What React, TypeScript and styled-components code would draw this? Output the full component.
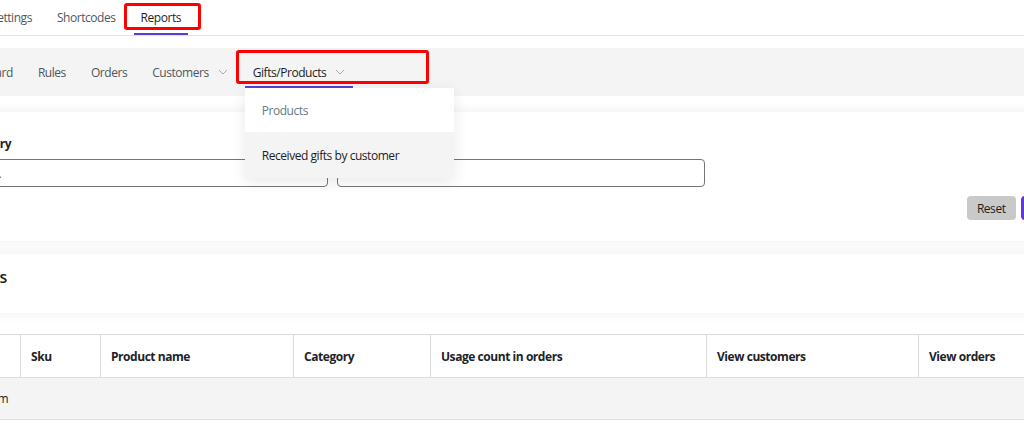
import React from "react";
import styled, { createGlobalStyle } from "styled-components";

const Global = createGlobalStyle`
  html, body { margin: 0; padding: 0; background: #fff; overflow: hidden; }
  body {
    font-family: "Open Sans", "Noto Sans", sans-serif;
    font-size: 12px;
    letter-spacing: -0.45px;
    color: #1e1e1e;
  }
  * { box-sizing: border-box; }
`;

const Page = styled.div`
  width: 1180px;
  margin-left: -80px;
  display: flex;
  flex-direction: column;
`;

const TopTabs = styled.nav`
  display: flex;
  gap: 11px;
  height: 36px;
  padding-left: 64px;
  border-bottom: 1px solid #e2e2e2;
`;

const TopTab = styled.div<{ $active?: boolean }>`
  position: relative;
  display: flex;
  align-items: center;
  height: 35px;
  padding: 2px 7px 0;
  color: ${(p) => (p.$active ? "#1e1e1e" : "#50575e")};
  border-bottom: 2px solid ${(p) => (p.$active ? "#5b3dd6" : "transparent")};
`;

const Highlight = styled.span<{ $l: number; $t: number; $w: number; $h: number }>`
  position: absolute;
  left: ${(p) => p.$l}px;
  top: ${(p) => p.$t}px;
  width: ${(p) => p.$w}px;
  height: ${(p) => p.$h}px;
  border: 3px solid #ff0000;
  border-radius: 3px;
  pointer-events: none;
  z-index: 20;
`;

const SubNav = styled.nav`
  display: flex;
  gap: 9px;
  height: 48px;
  margin-top: 12px;
  padding-left: 27px;
  background: #f4f4f4;
`;

const NavItem = styled.div<{ $active?: boolean }>`
  position: relative;
  display: flex;
  align-items: center;
  padding: 0 8px;
  color: ${(p) => (p.$active ? "#1e1e1e" : "#50575e")};
  &::after {
    content: "";
    display: ${(p) => (p.$active ? "block" : "none")};
    position: absolute;
    left: 0;
    right: 0;
    bottom: 8px;
    height: 2px;
    background: #5b3dd6;
  }
`;

const Chevron = styled.svg`
  width: 10px;
  height: 6px;
  margin-left: 9px;
  flex: none;
`;

const Dropdown = styled.div`
  position: absolute;
  left: 0;
  top: 40px;
  width: 209px;
  background: #fff;
  box-shadow: 0 4px 14px rgba(0, 0, 0, 0.09);
  z-index: 10;
  display: flex;
  flex-direction: column;
`;

const DropItem = styled.div<{ $hover?: boolean }>`
  display: flex;
  align-items: center;
  height: ${(p) => (p.$hover ? 46 : 44)}px;
  padding: 0 17px;
  background: ${(p) => (p.$hover ? "#f4f4f4" : "#fff")};
  color: ${(p) => (p.$hover ? "#1e1e1e" : "#6c7781")};
  white-space: nowrap;
`;

const Card = styled.section<{ $gap: number }>`
  margin: ${(p) => p.$gap}px 14px 0;
  background: #fff;
  box-shadow: 0 0 12px rgba(0, 0, 0, 0.07);
`;

const FilterBody = styled.div`
  padding: 24px 20px 21px;
  display: flex;
  flex-direction: column;
`;

const FilterGrid = styled.div`
  display: grid;
  grid-template-columns: 374px 368px;
  column-gap: 9px;
`;

const Field = styled.label`
  display: flex;
  flex-direction: column;
  gap: 7px;
`;

const LabelText = styled.span`
  font-weight: 700;
  line-height: 16px;
  padding-left: 7px;
`;

const Input = styled.input`
  height: 28px;
  border: 1px solid #757575;
  border-radius: 4px;
  padding: 0 8px;
  font: inherit;
  letter-spacing: inherit;
  color: #1e1e1e;
  background: #fff;
  &::placeholder { color: #757575; }
`;

const Actions = styled.div`
  display: flex;
  justify-content: flex-end;
  gap: 5px;
  margin-top: 9px;
`;

const Button = styled.button<{ $primary?: boolean }>`
  height: 24px;
  padding: 0 10px;
  border: none;
  border-radius: 4px;
  font: inherit;
  letter-spacing: inherit;
  background: ${(p) => (p.$primary ? "#6236d9" : "#c9c9c9")};
  color: ${(p) => (p.$primary ? "#fff" : "#1e1e1e")};
`;

const TitleBody = styled.div`
  padding: 12px 20px 25px;
`;

const Title = styled.h2`
  margin: 0;
  font-size: 16px;
  font-weight: 600;
  line-height: 22px;
  color: #1e1e1e;
`;

const Table = styled.table`
  margin: 21px 14px 0;
  width: 1152px;
  border-collapse: collapse;
  table-layout: fixed;
`;

const Th = styled.th`
  height: 43px;
  padding: 0 10px;
  border: 1px solid #dcdce0;
  text-align: left;
  font-weight: 700;
  color: #1d2327;
`;

const Td = styled.td`
  height: 42px;
  padding: 0 7px;
  background: #f4f4f4;
  border-bottom: 1px solid #dcdce0;
  color: #1e1e1e;
`;

const ChevronIcon = () => (
  <Chevron viewBox="0 0 10 6" fill="none">
    <path d="M1 1l4 4 4-4" stroke="#a7aaad" strokeWidth="1" />
  </Chevron>
);

const columns: [string, number][] = [
  ["ID", 86],
  ["Sku", 80],
  ["Product name", 193],
  ["Category", 137],
  ["Usage count in orders", 276],
  ["View customers", 212],
  ["View orders", 168],
];

export default function App() {
  return (
    <>
      <Global />
      <Page>
        <TopTabs>
          <TopTab>Settings</TopTab>
          <TopTab>Shortcodes</TopTab>
          <TopTab $active>
            Reports
            <Highlight $l={-10} $t={3} $w={77} $h={27} />
          </TopTab>
        </TopTabs>

        <SubNav>
          <NavItem>Dashboard</NavItem>
          <NavItem>Rules</NavItem>
          <NavItem>Orders</NavItem>
          <NavItem>
            Customers
            <ChevronIcon />
          </NavItem>
          <NavItem $active>
            Gifts/Products
            <ChevronIcon />
            <Highlight $l={-9} $t={2} $w={193} $h={34} />
            <Dropdown>
              <DropItem>Products</DropItem>
              <DropItem $hover>Received gifts by customer</DropItem>
            </Dropdown>
          </NavItem>
        </SubNav>

        <Card $gap={16}>
          <FilterBody>
            <FilterGrid>
              <Field>
                <LabelText>Category</LabelText>
                <Input placeholder="Select..." />
              </Field>
              <Field>
                <LabelText>Product</LabelText>
                <Input />
              </Field>
            </FilterGrid>
            <Actions>
              <Button>Reset</Button>
              <Button $primary>Filter</Button>
            </Actions>
          </FilterBody>
        </Card>

        <Card $gap={13}>
          <TitleBody>
            <Title>Results</Title>
          </TitleBody>
        </Card>

        <Table>
          <colgroup>
            {columns.map(([name, w]) => (
              <col key={name} style={{ width: w }} />
            ))}
          </colgroup>
          <thead>
            <tr>
              {columns.map(([name]) => (
                <Th key={name}>{name}</Th>
              ))}
            </tr>
          </thead>
          <tbody>
            <tr>
              <Td colSpan={7}>Custom item</Td>
            </tr>
          </tbody>
        </Table>
      </Page>
    </>
  );
}
